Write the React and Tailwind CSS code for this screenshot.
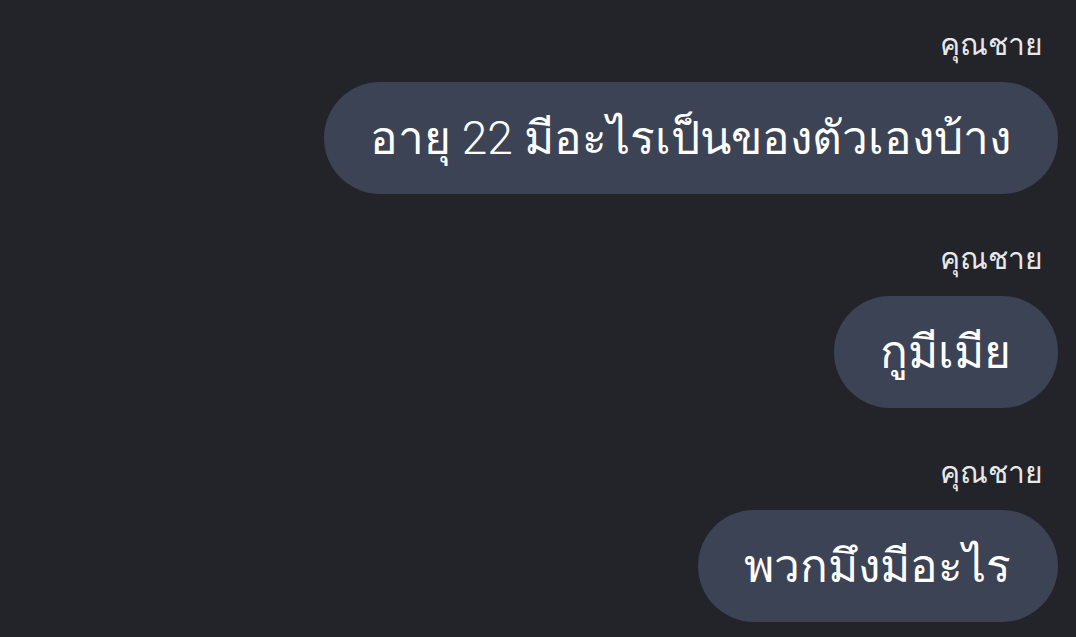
import React from "react";

const messages = [
  "อายุ 22 มีอะไรเป็นของตัวเองบ้าง",
  "กูมีเมีย",
  "พวกมึงมีอะไร",
];

export default function App() {
  return (
    <div
      className="w-full h-[637px] overflow-hidden bg-[#232429] pr-[18px] pt-[22px] flex flex-col items-end gap-[42px]"
      style={{ fontFamily: "Roboto, 'Noto Sans', 'DejaVu Sans', sans-serif" }}
    >
      {messages.map((m, i) => (
        <div key={i} className="flex flex-col items-end">
          <div className="text-[#e8e8ea] text-[30px] font-light leading-[46px] mr-[15px] mb-[14px]">คุณชาย</div>
          <div className="bg-[#3b4354] text-white text-[46px] font-light leading-[112px] h-[112px] pl-[46px] pr-[47px] rounded-[56px] whitespace-nowrap">
            {m}
          </div>
        </div>
      ))}
    </div>
  );
}
